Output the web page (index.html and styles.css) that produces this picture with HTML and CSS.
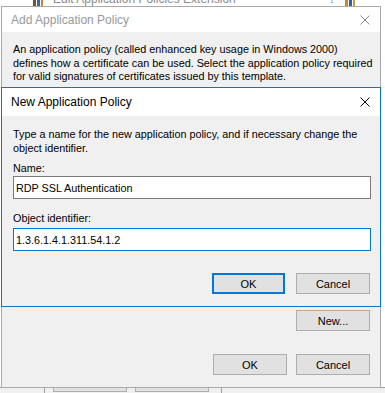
FILE: index.html
```html
<!DOCTYPE html>
<html lang="en">
<head>
    <meta charset="UTF-8">
    <meta name="viewport" content="width=device-width, initial-scale=1.0">
    <title>New Application Policy</title>
    <link rel="stylesheet" href="styles.css">
</head>
<body>
    <!-- window behind the dialogs -->
    <div class="backdrop">
        <div class="bd-title">
            <span class="bd-icon"></span>
            <span class="bd-text">Edit Application Policies Extension</span>
            <span class="bd-help">?</span>
            <span class="bd-icon2"></span>
        </div>
        <div class="bd-bottom">
            <span class="bd-panel"></span>
            <span class="bd-btn"></span>
            <span class="bd-btn"></span>
            <span class="bd-edge"></span>
        </div>
    </div>

    <div class="dialog outer">
        <div class="titlebar">
            <span class="title">Add Application Policy</span>
            <svg class="close" width="10" height="10" viewBox="0 0 10 10"><path d="M0.5 0.5L9.5 9.5M9.5 0.5L0.5 9.5" stroke="#8c8c8c" stroke-width="1"/></svg>
        </div>
        <div class="desc">
            An application policy (called enhanced key usage in Windows 2000)<br>
            defines how a certificate can be used. Select the application policy required<br>
            for valid signatures of certificates issued by this template.
        </div>

        <div class="dialog inner">
            <div class="titlebar tall">
                <span class="title">New Application Policy</span>
                <svg class="close" width="10" height="10" viewBox="0 0 10 10"><path d="M0.5 0.5L9.5 9.5M9.5 0.5L0.5 9.5" stroke="#000" stroke-width="1"/></svg>
            </div>
            <div class="body">
                <p class="intro">Type a name for the new application policy, and if necessary change the<br>object identifier.</p>
                <label class="field-label" for="name">Name:</label>
                <input class="field" type="text" id="name" value="RDP SSL Authentication">
                <label class="field-label oid-label" for="oid">Object identifier:</label>
                <input class="field focused" type="text" id="oid" value="1.3.6.1.4.1.311.54.1.2">
                <div class="buttons inner-buttons">
                    <button class="btn default">OK</button>
                    <button class="btn">Cancel</button>
                </div>
            </div>
        </div>

        <div class="buttons new-row">
            <button class="btn">New...</button>
        </div>
        <div class="buttons outer-buttons">
            <button class="btn">OK</button>
            <button class="btn">Cancel</button>
        </div>
    </div>
</body>
</html>
```

FILE: styles.css
```css
body {
    margin: 0;
    font-family: "Liberation Sans", Arial, sans-serif;
    font-size: 10.8px;
    color: #000;
    background-color: #fff;
    overflow: hidden;
}
.backdrop {
    height: 393px;
    display: flex;
    flex-direction: column;
    justify-content: space-between;
}
.bd-title {
    height: 6px;
    overflow: hidden;
    display: flex;
    align-items: flex-start;
}
.bd-icon {
    width: 10px;
    height: 14px;
    margin: -8px 0 0 33px;
    background: linear-gradient(90deg, #6b5a2a 0 3px, #fff 3px 4px, #3a63b8 4px 7px, #fff 7px 8px, #b88a2a 8px);
}
.bd-text {
    margin: -7px 0 0 10px;
    line-height: 12px;
    font-size: 12px;
    color: #8a8a8a;
}
.bd-help {
    margin: -7px 0 0 93px;
    line-height: 12px;
    font-size: 12px;
    color: #777;
}
.bd-icon2 {
    width: 10px;
    height: 14px;
    margin: -8px 0 0 10px;
    background: linear-gradient(90deg, #c98a1a 0 3px, #fff 3px 4px, #2a5fc0 4px 7px, #fff 7px 8px, #c0a030 8px);
}
.bd-bottom {
    height: 6px;
    display: flex;
    background-color: #f0f0f0;
    border-top: 1px solid #a0a0a0;
    box-sizing: border-box;
}
.bd-panel {
    width: 44px;
    border-right: 1px solid #a0a0a0;
}
.bd-btn {
    width: 72px;
    height: 3px;
    margin-left: 8px;
    background-color: #e1e1e1;
    border: 1px solid #adadad;
    border-top: none;
}
.bd-btn:first-of-type {
    margin-left: 127px;
}
.bd-edge {
    width: 12px;
    border-right: 1px solid #a0a0a0;
}
.dialog {
    background-color: #f0f0f0;
    box-sizing: border-box;
    display: flex;
    flex-direction: column;
}
.outer {
    position: absolute;
    left: 1px;
    top: 6px;
    width: 380px;
    height: 382px;
    border: 1px solid #aaaaaa;
}
.titlebar {
    height: 25px;
    padding: 0 10px 0 9px;
    background-color: #fff;
    display: flex;
    align-items: center;
    justify-content: space-between;
    flex-shrink: 0;
}
.titlebar.tall {
    height: 28px;
}
.title {
    font-size: 12px;
    color: #999;
}
.inner .title {
    color: #000;
}
.close {
    display: block;
}
.desc {
    height: 55px;
    box-sizing: border-box;
    padding: 11px 0 0 11px;
    line-height: 13.5px;
    white-space: nowrap;
    flex-shrink: 0;
}
.inner {
    margin: 0 -1px;
    height: 220px;
    border: 1px solid #0078d7;
    flex-shrink: 0;
}
.body {
    padding: 11px 9px 12px 11px;
    display: flex;
    flex-direction: column;
}
.intro {
    margin: 0;
    line-height: 14px;
    white-space: nowrap;
}
.field-label {
    display: block;
    margin-top: 6px;
    line-height: 14px;
}
.oid-label {
    margin-top: 12px;
}
.field {
    margin-top: 1px;
    height: 23px;
    box-sizing: border-box;
    padding: 0 2px;
    border: 1px solid #7a7a7a;
    background-color: #fff;
    font-family: inherit;
    font-size: 10.8px;
    color: #000;
    outline: none;
}
.field.focused {
    margin-top: 3px;
    border-color: #0078d7;
}
.buttons {
    display: flex;
    justify-content: flex-end;
    gap: 11px;
}
.inner-buttons {
    margin-top: 22px;
    padding-right: 1px;
}
.new-row {
    margin-top: 3px;
    padding-right: 10px;
}
.outer-buttons {
    margin-top: 23px;
    padding-right: 10px;
    gap: 9px;
}
.btn {
    width: 74px;
    height: 21px;
    padding: 0;
    background-color: #e1e1e1;
    border: 1px solid #adadad;
    font-family: inherit;
    font-size: 11px;
    color: #000;
}
.btn.default {
    border: 2px solid #0078d7;
    width: 73px;
}
```
